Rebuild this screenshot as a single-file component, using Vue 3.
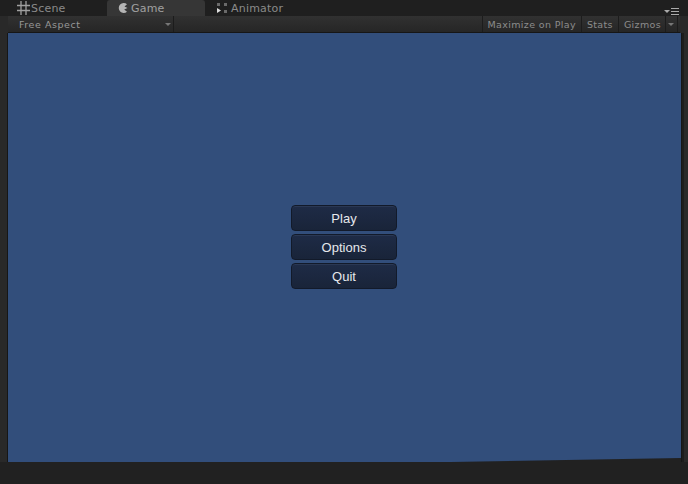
<template>
  <div class="editor">
    <header class="tab-bar">
      <div class="tab-grip"></div>
      <div class="tab">
        <svg class="tab-icon" width="13" height="14" viewBox="0 0 13 14">
          <path d="M4 0v14M9 0v14M0 4.500h13M0 9.500h13" stroke="#a0a0a0" stroke-width="1.300" fill="none" />
        </svg>
        <span>Scene</span>
      </div>
      <div class="tab active">
        <svg class="tab-icon" width="12" height="12" viewBox="0 0 12 12">
          <path d="M10 2.200A5 5 0 1 0 10 9.800L7.200 7.500 10.500 6 7.500 4.500z" fill="#b4b4b4" />
        </svg>
        <span>Game</span>
      </div>
      <div class="tab">
        <svg class="tab-icon" width="12" height="12" viewBox="0 0 12 12">
          <path d="M1 1h3v3H1zM8 1h3v3H8zM8 8h3v3H8z" fill="#6a6a6a" />
          <path d="M1 6l4 2.500-4 2.500z" fill="#ddd" />
        </svg>
        <span>Animator</span>
      </div>
      <div class="tab-menu">
        <span class="arrow small"></span>
        <span class="bars"></span>
      </div>
    </header>

    <div class="toolbar">
      <div class="aspect">
        <span>Free Aspect</span>
        <span class="arrow"></span>
      </div>
      <div class="tool-right">
        <span class="tool-btn">Maximize on Play</span>
        <span class="tool-btn">Stats</span>
        <span class="tool-btn gizmos">Gizmos</span>
        <span class="tool-btn drop"><span class="arrow"></span></span>
      </div>
    </div>

    <main class="game-view">
      <nav class="menu">
        <button v-for="item in menuItems" :key="item" type="button" class="menu-btn">{{ item }}</button>
      </nav>
      <div class="torn-edge"></div>
    </main>

    <footer class="status-bar"></footer>
  </div>
</template>

<script setup>
const menuItems = ['Play', 'Options', 'Quit']
</script>

<style>
html,
body {
  margin: 0;
  background: #222;
}
</style>

<style scoped>
.editor {
  width: 688px;
  height: 484px;
  display: flex;
  flex-direction: column;
  overflow: hidden;
  background: #292929;
  font-family: "DejaVu Sans", sans-serif;
  color: #a0a0a0;
}

.tab-bar {
  height: 16px;
  flex: none;
  display: flex;
  background: #1f1f1f;
  font-size: 11px;
  letter-spacing: 0.2px;
}

.tab-grip {
  width: 17px;
}

.tab {
  width: 90px;
  display: flex;
  align-items: center;
  gap: 1px;
  color: #8a8a8a;
}

.tab.active {
  width: 98px;
  padding-left: 10px;
  box-sizing: border-box;
  background: #363636;
  border-radius: 3px 3px 0 0;
  gap: 2px;
  color: #a0a0a0;
}

.tab.active + .tab {
  padding-left: 11px;
  gap: 3px;
}

.tab-menu {
  margin-left: auto;
  display: flex;
  align-items: flex-end;
  gap: 1px;
  padding: 0 9px 1px 0;
}

.bars {
  width: 8px;
  height: 5px;
  border-top: 1px solid #aaa;
  border-bottom: 1px solid #aaa;
  position: relative;
}

.bars::after {
  content: "";
  position: absolute;
  left: 0;
  right: 0;
  top: 2px;
  height: 1px;
  background: #aaa;
}

.arrow {
  width: 0;
  height: 0;
  border-left: 3px solid transparent;
  border-right: 3px solid transparent;
  border-top: 3px solid #777;
}

.arrow.small {
  border-top-color: #aaa;
  margin-bottom: 2px;
}

.toolbar {
  height: 17px;
  flex: none;
  box-sizing: border-box;
  display: flex;
  justify-content: space-between;
  margin: 0 8px 0 8px;
  background: linear-gradient(#313131, #262626);
  border-bottom: 1px solid #161616;
  font-size: 9.5px;
  letter-spacing: 0.35px;
}

.aspect {
  width: 166px;
  box-sizing: border-box;
  padding: 0 2px 0 11px;
  display: flex;
  align-items: center;
  justify-content: space-between;
  border-right: 1px solid #1c1c1c;
  color: #989898;
  letter-spacing: 0.55px;
}

.tool-right {
  display: flex;
  margin-right: 2px;
}

.tool-btn {
  display: flex;
  align-items: center;
  padding: 0 5px;
  border-left: 1px solid #1c1c1c;
  color: #8c8c8c;
}

.tool-btn.gizmos {
  padding-right: 4px;
}

.tool-btn.drop {
  padding: 0 3px 0 2px;
  border-right: 1px solid #1c1c1c;
}

.game-view {
  flex: 1;
  position: relative;
  margin: 0 7px 0 8px;
  display: flex;
  align-items: center;
  justify-content: center;
  background: #324e7b;
  box-shadow: -1px 0 0 #161616, 1px 0 0 #161616, 3px 0 0 #1d1d1d;
}

.menu {
  display: flex;
  flex-direction: column;
  gap: 3px;
  width: 106px;
  margin: 2px 1px 3px 0;
}

.menu-btn {
  height: 26px;
  padding: 0;
  border: 1px solid #121a2a;
  border-radius: 4px;
  background: linear-gradient(#1e2b46, #192439);
  box-shadow: inset 0 1px 0 #2a3854;
  color: #e6e8ec;
  font-family: "Liberation Sans", sans-serif;
  font-size: 13px;
}

/* the lower right edge of the reference is slightly rough */
.torn-edge {
  position: absolute;
  right: 0;
  bottom: 0;
  width: 230px;
  height: 4px;
  background: #212121;
  clip-path: polygon(0 100%, 50% 50%, 100% 0, 100% 100%);
}

.status-bar {
  height: 22px;
  flex: none;
  background: #212121;
}
</style>
